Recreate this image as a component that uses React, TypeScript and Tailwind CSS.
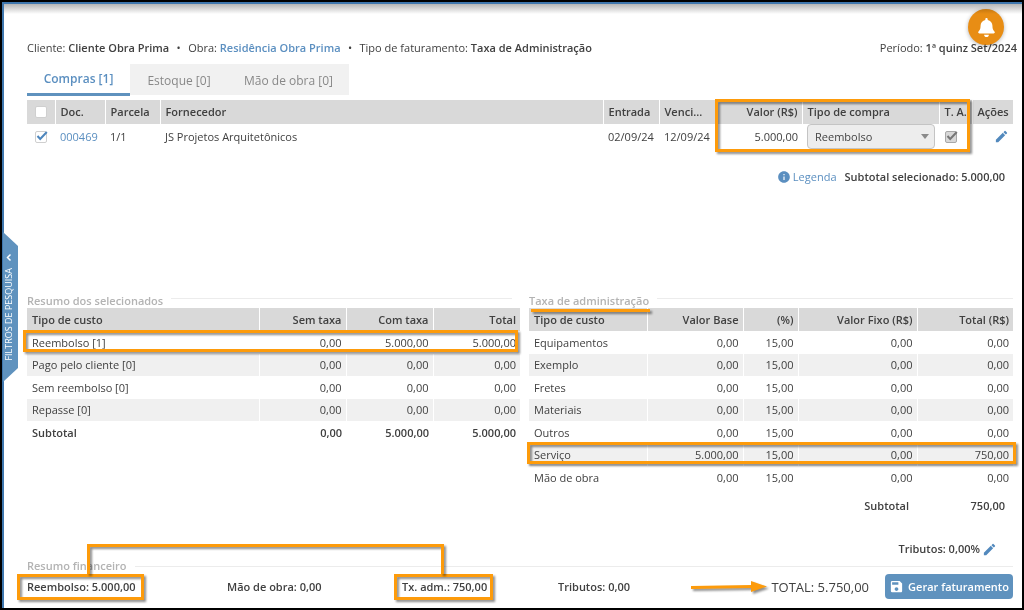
import type { ReactNode } from "react";
import { MdEdit, MdInfo, MdSave } from "react-icons/md";
import { FaBell } from "react-icons/fa";

const SHADOW = "drop-shadow-[2px_2px_1px_rgba(0,0,0,0.45)]";

function Highlight({ className }: { className: string }) {
  return (
    <div
      aria-hidden="true"
      className={`pointer-events-none absolute border-3 border-[#fd9b0b] ${SHADOW} ${className}`}
    />
  );
}

type Cells = string[];

function CostTable({
  label,
  columns,
  widths,
  rows,
  footer,
}: {
  label: string;
  columns: Cells;
  widths: string[];
  rows: Cells[];
  footer?: Cells;
}) {
  return (
    <table aria-label={label} className="w-full table-fixed border-collapse">
      <thead>
        <tr className="h-[23px] bg-[#d9d9d9]">
          {columns.map((c, i) => (
            <th
              key={c}
              scope="col"
              className={`${widths[i]} pr-1 pl-[5px] font-semibold ${i === 0 ? "text-left" : "border-l border-white text-right"}`}
            >
              {c}
            </th>
          ))}
        </tr>
      </thead>
      <tbody>
        {rows.map((r) => (
          <tr key={r[0]} className="odd:h-[23px] even:h-[22px] even:bg-[#f0f0f0]">
            {r.map((c, i) => (
              <td key={i} className={`pr-1 pl-[5px] ${i === 0 ? "text-left" : "border-l border-white text-right"}`}>
                {c}
              </td>
            ))}
          </tr>
        ))}
      </tbody>
      {footer && (
        <tfoot>
          <tr className="h-[23px]">
            {footer.map((c, i) => (
              <td key={i} className={`pr-1 pl-[5px] font-semibold ${i === 0 ? "text-left" : "text-right"}`}>
                {c}
              </td>
            ))}
          </tr>
        </tfoot>
      )}
    </table>
  );
}

function SectionTitle({ children }: { children: ReactNode }) {
  return (
    <div className="flex h-[15px] items-center gap-2">
      <h2 className="font-semibold text-[#b3b3b3]">{children}</h2>
      <div className="mb-1 h-px flex-1 bg-[#ececec]" />
    </div>
  );
}

const summaryRows: Cells[] = [
  ["Reembolso [1]", "0,00", "5.000,00", "5.000,00"],
  ["Pago pelo cliente [0]", "0,00", "0,00", "0,00"],
  ["Sem reembolso [0]", "0,00", "0,00", "0,00"],
  ["Repasse [0]", "0,00", "0,00", "0,00"],
];

const feeRows: Cells[] = [
  ["Equipamentos", "0,00", "15,00", "0,00", "0,00"],
  ["Exemplo", "0,00", "15,00", "0,00", "0,00"],
  ["Fretes", "0,00", "15,00", "0,00", "0,00"],
  ["Materiais", "0,00", "15,00", "0,00", "0,00"],
  ["Outros", "0,00", "15,00", "0,00", "0,00"],
  ["Serviço", "5.000,00", "15,00", "0,00", "750,00"],
  ["Mão de obra", "0,00", "15,00", "0,00", "0,00"],
];

function Checkbox({ label, checked, disabled }: { label: string; checked?: boolean; disabled?: boolean }) {
  return (
    <span className="relative block size-3">
      <input
        type="checkbox"
        aria-label={label}
        defaultChecked={checked}
        disabled={disabled}
        className={`peer block size-3 appearance-none rounded-[2px] border ${
          disabled ? "border-[#a8a8a8] bg-[#d8d8d8]" : "border-[#cfcfcf] bg-white"
        }`}
      />
      <svg
        viewBox="0 0 12 12"
        className={`pointer-events-none absolute inset-0 hidden size-3 overflow-visible peer-checked:block ${
          disabled ? "text-[#777]" : "text-[#4d86bd]"
        }`}
      >
        <path d="M2.5 5 5.2 8 11.8 1" fill="none" stroke="currentColor" strokeWidth="2" />
      </svg>
    </span>
  );
}

function PurchasesTable() {
  const th = "border-l border-white pr-1 pl-[5px] font-semibold";
  const td = "pr-1 pl-[5px]";
  return (
    <div className="relative mt-1">
      <table aria-label="Compras" className="w-full table-fixed border-collapse">
        <thead>
          <tr className="h-6 bg-[#d9d9d9] text-left">
            <th scope="col" className="w-7 pl-2">
              <Checkbox label="Selecionar todos" />
            </th>
            <th scope="col" className={`w-[50px] ${th}`}>Doc.</th>
            <th scope="col" className={`w-[55px] ${th}`}>Parcela</th>
            <th scope="col" className={th}>Fornecedor</th>
            <th scope="col" className={`w-14 ${th}`}>Entrada</th>
            <th scope="col" className={`w-14 ${th}`}>Venci...</th>
            <th scope="col" className={`w-[87px] text-right ${th}`}>Valor (R$)</th>
            <th scope="col" className={`w-[137px] ${th}`}>Tipo de compra</th>
            <th scope="col" className={`w-[33px] whitespace-nowrap ${th}`}>T. A.</th>
            <th scope="col" className={`w-[41px] ${th}`}>Ações</th>
          </tr>
        </thead>
        <tbody>
          <tr className="h-[25px]">
            <td className="pl-2">
              <Checkbox label="Selecionar 000469" checked />
            </td>
            <td className={td}>
              <a href="#doc-000469" className="text-[#5b8fc0]">000469</a>
            </td>
            <td className={td}>1/1</td>
            <td className={td}>JS Projetos Arquitetônicos</td>
            <td className={td}>02/09/24</td>
            <td className={td}>12/09/24</td>
            <td className={`${td} text-right`}>5.000,00</td>
            <td className={td}>
              <div className="relative">
                <select
                  aria-label="Tipo de compra"
                  disabled
                  className="block h-[25px] w-full appearance-none rounded border border-[#c4c4c4] bg-[#ededed] px-[7px] text-[#444] opacity-100"
                >
                  <option>Reembolso</option>
                </select>
                <svg viewBox="0 0 8 5" className="pointer-events-none absolute top-2.5 right-1.5 h-[5px] w-2">
                  <path d="M0 0h8L4 5z" fill="#8a8a8a" />
                </svg>
              </div>
            </td>
            <td className="pl-1.5">
              <Checkbox label="Taxa de administração" checked disabled />
            </td>
            <td>
              <button type="button" aria-label="Editar" className="mr-1 ml-auto block text-[#5289bd]">
                <MdEdit size={15} />
              </button>
            </td>
          </tr>
        </tbody>
      </table>
      <Highlight className="-top-px right-[43px] h-[53px] w-[255px]" />
    </div>
  );
}

export default function App() {
  return (
    <div className="flex min-h-screen flex-col border-2 border-black bg-white font-['Open_Sans','Liberation_Sans',sans-serif] text-[11px] leading-4 text-[#404040]">
      <div className="relative flex flex-1 flex-col border-t-2 border-l-2 border-[#3f77ae] pr-[9px] pb-[9px] pl-[23px]">
        <div className="absolute inset-x-0 top-0 h-2.5 bg-gradient-to-b from-[#b5b5b5] to-white" />

        <button
          type="button"
          className="absolute top-[228px] -left-px flex h-[150px] w-[15px] items-center justify-center bg-[#5f92be] pr-1 text-[9px] leading-3 text-white [clip-path:polygon(0_0,100%_14px,100%_136px,0_100%)]"
        >
          <span className="flex rotate-180 items-center gap-1.5 whitespace-nowrap [writing-mode:vertical-rl]">
            FILTROS DE PESQUISA
            <svg viewBox="0 0 6 8" className="h-2 w-1.5">
              <path d="M1.5 1 4.5 4 1.5 7" fill="none" stroke="currentColor" strokeWidth="1.5" />
            </svg>
          </span>
        </button>

        <header className="-mr-1 mt-[34px] flex h-5 items-center justify-between whitespace-nowrap">
          <ul className="flex">
            <li>Cliente: <strong className="font-semibold">Cliente Obra Prima</strong></li>
            <li aria-hidden="true" className="w-[19px] text-center">•</li>
            <li>Obra: <a href="#obra" className="font-semibold text-[#5b8fc0]">Residência Obra Prima</a></li>
            <li aria-hidden="true" className="w-[19px] text-center">•</li>
            <li>Tipo de faturamento: <strong className="font-semibold">Taxa de Administração</strong></li>
          </ul>
          <p>Período: <strong className="font-semibold">1ª quinz Set/2024</strong></p>
        </header>

        <button
          type="button"
          aria-label="Notificações"
          className="absolute top-[5px] right-[18px] flex size-9 items-center justify-center rounded-full bg-[#e88d14] text-white mix-blend-multiply shadow-[0_1px_4px_rgba(0,0,0,0.3)]"
        >
          <FaBell size={19} />
        </button>

        <nav className="mt-1.5 flex h-8 items-start text-xs">
          <button type="button" className="h-8 w-[103px] border-b-[3px] border-[#5f92be] font-semibold text-[#5b8fc0]">
            Compras [1]
          </button>
          <div className="flex h-[31px] bg-[#f1f1f1] text-[#888]">
            <button type="button" className="w-[98px] pt-0.5">Estoque [0]</button>
            <button type="button" className="w-[121px] pt-0.5">Mão de obra [0]</button>
          </div>
        </nav>

        <PurchasesTable />

        <div className="mt-[18px] mr-2 flex h-5 items-center justify-end gap-2">
          <a href="#legenda" className="flex items-center gap-0.5 text-[#5b8fc0]">
            <MdInfo size={14} />
            Legenda
          </a>
          <strong className="font-semibold">Subtotal selecionado: 5.000,00</strong>
        </div>

        <div className="mt-auto flex items-start gap-[9px]">
          <section className="relative min-w-0 flex-[493]">
            <div className="mr-2">
              <SectionTitle>Resumo dos selecionados</SectionTitle>
            </div>
            <CostTable
              label="Resumo dos selecionados"
              columns={["Tipo de custo", "Sem taxa", "Com taxa", "Total"]}
              widths={["", "w-[87px]", "w-[87px]", "w-[87px]"]}
              rows={summaryRows}
              footer={["Subtotal", "0,00", "5.000,00", "5.000,00"]}
            />
            <Highlight className="top-[37px] right-0.5 -left-1 h-[22px]" />
          </section>

          <section className="relative min-w-0 flex-[484]">
            <SectionTitle>Taxa de administração</SectionTitle>
            <CostTable
              label="Taxa de administração"
              columns={["Tipo de custo", "Valor Base", "(%)", "Valor Fixo (R$)", "Total (R$)"]}
              widths={["", "w-24", "w-[55px]", "w-[119px]", "w-24"]}
              rows={feeRows}
            />
            <div aria-hidden="true" className={`absolute top-4 left-0.5 h-[3px] w-[119px] bg-[#fd9b0b] ${SHADOW}`} />
            <Highlight className="top-[149px] -right-[3px] -left-0.5 h-[22px]" />
            <p className="mt-[9px] mr-2 flex justify-end font-semibold">
              <span>Subtotal</span>
              <span className="w-24 text-right">750,00</span>
            </p>
          </section>
        </div>

        <p className="mt-[27px] mr-4 flex items-center justify-end gap-0.5 font-semibold">
          Tributos: 0,00%
          <button type="button" aria-label="Editar tributos" className="text-[#5289bd]">
            <MdEdit size={15} />
          </button>
        </p>

        <footer className="relative mt-px">
          <div className="flex h-4 items-center gap-2">
            <h2 className="font-semibold text-[#b3b3b3]">Resumo financeiro</h2>
            <div className="h-px flex-1 bg-[#ececec]" />
          </div>
          <div className="grid grid-cols-[200px_175px_156px_1fr_auto] items-center font-semibold whitespace-nowrap">
            <span className="relative justify-self-start">
              Reembolso: 5.000,00
              <Highlight className="-inset-y-[5px] -right-2 -left-2.5" />
            </span>
            <span>Mão de obra: 0,00</span>
            <span className="relative justify-self-start">
              Tx. adm.: 750,00
              <Highlight className="-inset-y-[5px] -right-1.5 -left-2" />
            </span>
            <span>Tributos: 0,00</span>
            <div className="flex items-center">
              <svg viewBox="0 0 76 14" className={`h-3.5 w-[76px] ${SHADOW}`}>
                <path d="M0 7.5 61 6.5" stroke="#fd9b0b" strokeWidth="3" />
                <path d="M60 1 76 6.5 60 12z" fill="#fd9b0b" />
              </svg>
              <span className="ml-1 text-[13px] font-medium">TOTAL: 5.750,00</span>
              <button
                type="button"
                className="ml-4 flex h-[25px] w-32 items-center justify-center gap-1 rounded bg-[#5f92be] text-white"
              >
                <MdSave size={15} />
                Gerar faturamento
              </button>
            </div>
          </div>
          <div
            aria-hidden="true"
            className={`pointer-events-none absolute -top-3.5 left-[60px] h-[30px] w-[357px] border-x-[3px] border-t-[3px] border-[#fd9b0b] ${SHADOW}`}
          />
        </footer>
      </div>
    </div>
  );
}
